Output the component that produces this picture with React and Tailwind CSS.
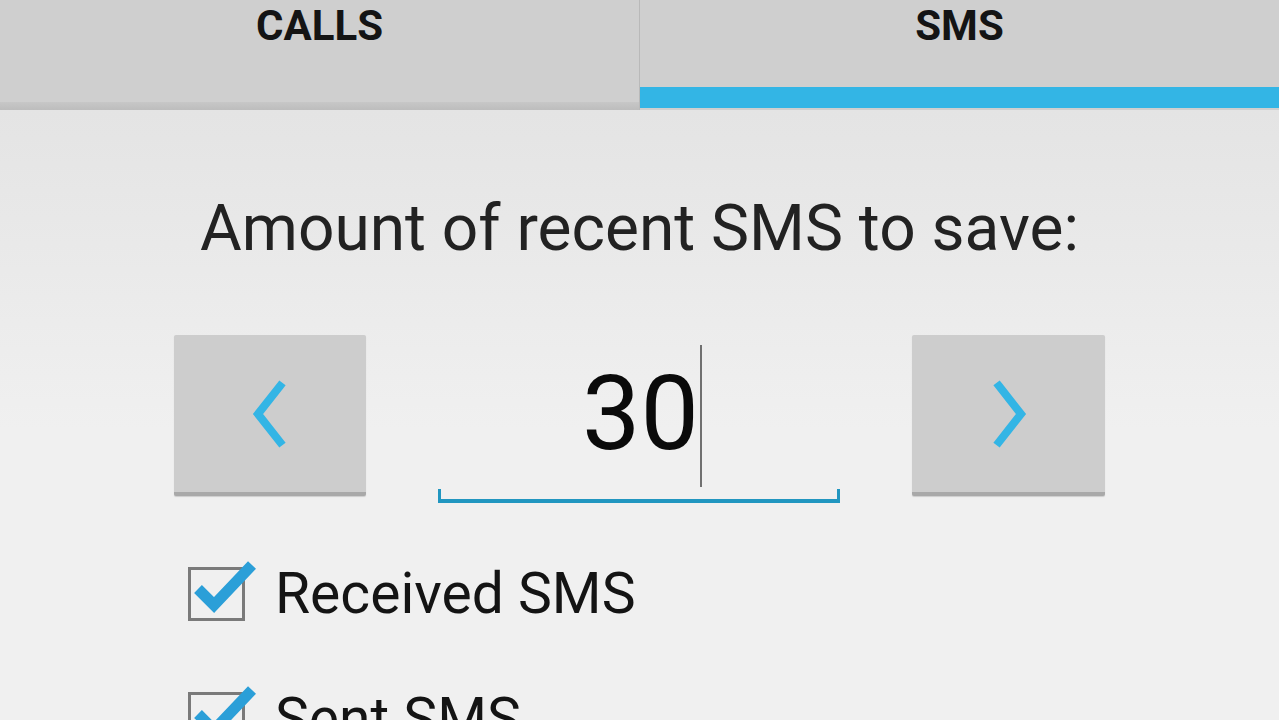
import React from "react";

function Chevron({ dir }) {
  return (
    <svg width="60" height="80" viewBox="0 0 60 80" className="block">
      {dir === "left" ? (
        <polyline points="40,12 18,40 40,68" fill="none" stroke="#33b5e5" strokeWidth="8" strokeLinecap="square" strokeLinejoin="miter" />
      ) : (
        <polyline points="20,12 42,40 20,68" fill="none" stroke="#33b5e5" strokeWidth="8" strokeLinecap="square" strokeLinejoin="miter" />
      )}
    </svg>
  );
}

function CheckBox() {
  return (
    <div className="relative w-[57px] h-[54px] shrink-0">
      <div className="absolute inset-0 border-[3px] border-[#7a7a7a]" />
      <svg className="absolute left-[4px] top-[-10px]" width="66" height="58" viewBox="0 0 66 58">
        <polyline points="6,32 22,48 60,8" fill="none" stroke="#2b9fd8" strokeWidth="11" strokeLinejoin="miter" />
      </svg>
    </div>
  );
}

export default function App() {
  return (
    <div className="w-[1279px] h-[720px] overflow-hidden flex flex-col bg-[#f0f0f0] text-[#141414]" style={{ fontFamily: "Roboto, 'Liberation Sans', sans-serif" }}>
      {/* Tabs */}
      <div className="flex h-[110px] shrink-0 bg-[#cfcfcf]">
        <div className="flex-1 flex flex-col border-r border-[#b9b9b9]">
          <div className="h-[52px] flex items-center justify-center">
            <span className="text-[42px] font-bold leading-none">CALLS</span>
          </div>
          <div className="flex-1" />
          <div className="h-[8px] bg-gradient-to-b from-[#c7c7c7] to-[#bdbdbd]" />
        </div>
        <div className="flex-1 flex flex-col">
          <div className="h-[52px] flex items-center justify-center">
            <span className="text-[42px] font-bold leading-none">SMS</span>
          </div>
          <div className="flex-1" />
          <div className="h-[21px] bg-[#33b5e5] mb-[2px]" />
        </div>
      </div>

      {/* Content */}
      <div className="flex-1 flex flex-col bg-gradient-to-b from-[#e4e4e4] via-[#f0f0f0] to-[#f0f0f0]">
        <div className="h-[87px]" />
        <div className="flex justify-center">
          <span className="text-[64px] leading-none text-[#222]">Amount of recent SMS to save:</span>
        </div>

        <div className="flex pl-[174px] mt-[74px] items-start">
          <div className="w-[192px] h-[161px] bg-[#cdcdcd] rounded-[2px] border-b-[4px] border-[#a9a9a9] flex items-center justify-center shadow-[0_1px_1px_rgba(0,0,0,0.15)]">
            <Chevron dir="left" />
          </div>
          <div className="ml-[72px] w-[402px] h-[168px] relative flex flex-col">
            <div className="flex-1 flex items-center justify-center">
              <span className="text-[104px] leading-none text-[#0a0a0a] mt-[4px] ml-[6px]">30</span>
              <span className="w-[2px] h-[142px] bg-[#707070] ml-[1px] mt-[8px]" />
            </div>
            <div className="h-[14px] border-x-[3px] border-b-[4px] border-[#2196c0]" />
          </div>
          <div className="ml-[72px] w-[193px] h-[161px] bg-[#cdcdcd] rounded-[2px] border-b-[4px] border-[#a9a9a9] flex items-center justify-center shadow-[0_1px_1px_rgba(0,0,0,0.15)]">
            <Chevron dir="right" />
          </div>
        </div>

        <div className="flex items-center pl-[188px] mt-[62px] gap-[30px]">
          <CheckBox />
          <span className="text-[57px] leading-none">Received SMS</span>
        </div>
        <div className="flex items-center pl-[188px] mt-[68px] gap-[30px]">
          <CheckBox />
          <span className="text-[57px] leading-none">Sent SMS</span>
        </div>
      </div>
    </div>
  );
}
